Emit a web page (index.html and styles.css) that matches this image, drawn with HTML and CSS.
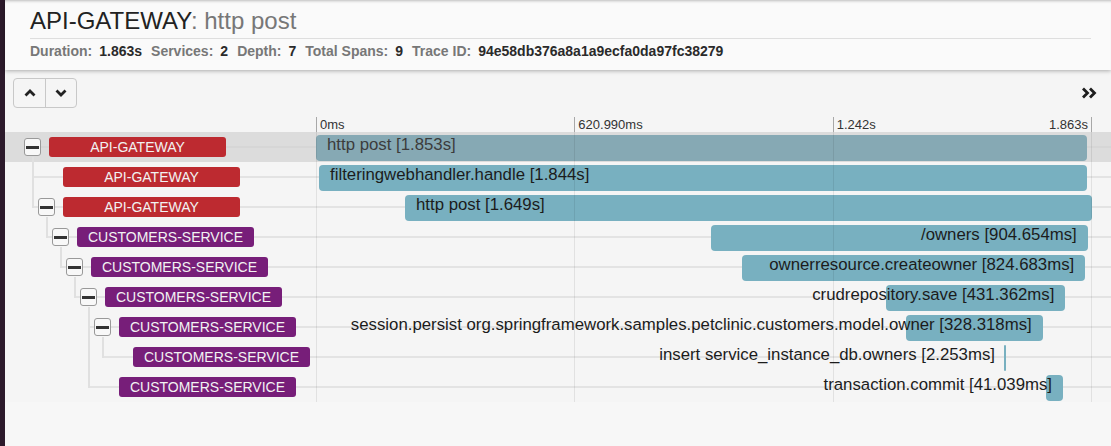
FILE: index.html
```html
<!DOCTYPE html>
<html>
<head>
<meta charset="utf-8">
<title>Trace</title>
<link rel="stylesheet" href="styles.css">
</head>
<body>
<div class="app">
  <div class="strip"></div>
  <main class="main">
    <header class="trace-header">
      <h1 class="title"><span class="svc">API-GATEWAY</span><span class="op">: http post</span></h1>
      <div class="stats">
        <span class="stat"><span class="k">Duration:</span><span class="v">1.863s</span></span>
        <span class="stat"><span class="k">Services:</span><span class="v">2</span></span>
        <span class="stat"><span class="k">Depth:</span><span class="v">7</span></span>
        <span class="stat"><span class="k">Total Spans:</span><span class="v">9</span></span>
        <span class="stat"><span class="k">Trace ID:</span><span class="v">94e58db376a8a1a9ecfa0da97fc38279</span></span>
      </div>
    </header>

    <div class="toolbar">
      <div class="btn-group">
        <button class="btn" type="button" aria-label="Previous">
          <svg width="12" height="8" viewBox="0 0 12 8"><polyline points="1.5,6.5 6,2 10.5,6.5" fill="none" stroke="#222" stroke-width="2.8"/></svg>
        </button>
        <button class="btn" type="button" aria-label="Next">
          <svg width="12" height="8" viewBox="0 0 12 8"><polyline points="1.5,1.5 6,6 10.5,1.5" fill="none" stroke="#222" stroke-width="2.8"/></svg>
        </button>
      </div>
      <button class="expand" type="button" aria-label="Expand">
        <svg width="16" height="12" viewBox="0 0 16 12"><polyline points="2,1.5 6.5,6 2,10.5" fill="none" stroke="#1e1e1e" stroke-width="2.8"/><polyline points="9,1.5 13.5,6 9,10.5" fill="none" stroke="#1e1e1e" stroke-width="2.8"/></svg>
      </button>
    </div>

    <div class="ticks">
      <div class="tick-spacer"></div>
      <div class="tick-scale">
        <div class="tick"><span>0ms</span></div>
        <div class="tick"><span>620.990ms</span></div>
        <div class="tick last"><span>1.242s</span><span>1.863s</span></div>
      </div>
    </div>

    <div class="rows">
      <div class="row selected root" style="--d:0">
        <div class="row-left"><span class="toggle"><i></i></span><span class="badge gw">API-GATEWAY</span></div>
        <div class="row-right"><div class="bar start" style="margin-left:0%;width:99.36%"><span class="label">http post [1.853s]</span></div></div>
      </div>
      <div class="row leaf" style="--d:1">
        <div class="row-left"><span class="badge gw">API-GATEWAY</span></div>
        <div class="row-right"><div class="bar start" style="margin-left:0.39%;width:98.97%"><span class="label">filteringwebhandler.handle [1.844s]</span></div></div>
      </div>
      <div class="row" style="--d:1">
        <div class="row-left"><span class="toggle"><i></i></span><span class="badge gw">API-GATEWAY</span></div>
        <div class="row-right"><div class="bar start" style="margin-left:11.47%;width:88.53%"><span class="label">http post [1.649s]</span></div></div>
      </div>
      <div class="row" style="--d:2">
        <div class="row-left"><span class="toggle"><i></i></span><span class="badge cs">CUSTOMERS-SERVICE</span></div>
        <div class="row-right"><div class="bar end" style="margin-left:50.9%;width:48.56%"><span class="label">/owners [904.654ms]</span></div></div>
      </div>
      <div class="row" style="--d:3">
        <div class="row-left"><span class="toggle"><i></i></span><span class="badge cs">CUSTOMERS-SERVICE</span></div>
        <div class="row-right"><div class="bar end" style="margin-left:54.86%;width:44.27%"><span class="label">ownerresource.createowner [824.683ms]</span></div></div>
      </div>
      <div class="row" style="--d:4">
        <div class="row-left"><span class="toggle"><i></i></span><span class="badge cs">CUSTOMERS-SERVICE</span></div>
        <div class="row-right"><div class="bar end" style="margin-left:73.41%;width:23.16%"><span class="label">crudrepository.save [431.362ms]</span></div></div>
      </div>
      <div class="row" style="--d:5">
        <div class="row-left"><span class="toggle"><i></i></span><span class="badge cs">CUSTOMERS-SERVICE</span></div>
        <div class="row-right"><div class="bar end" style="margin-left:76.03%;width:17.62%"><span class="label">session.persist org.springframework.samples.petclinic.customers.model.owner [328.318ms]</span></div></div>
      </div>
      <div class="row leaf" style="--d:6">
        <div class="row-left"><span class="badge cs">CUSTOMERS-SERVICE</span></div>
        <div class="row-right"><div class="bar end thin" style="margin-left:88.66%;width:2px"><span class="label">insert service_instance_db.owners [2.253ms]</span></div></div>
      </div>
      <div class="row leaf" style="--d:5">
        <div class="row-left"><span class="badge cs">CUSTOMERS-SERVICE</span></div>
        <div class="row-right"><div class="bar end" style="margin-left:94.07%;width:2.2%"><span class="label">transaction.commit [41.039ms]</span></div></div>
      </div>

      <svg class="tree-lines" width="311" height="270" viewBox="0 0 311 270" aria-hidden="true">
        <g stroke="#e0e0e0" stroke-width="2">
          <line x1="28" y1="25" x2="28" y2="76"/>
          <line x1="42" y1="85" x2="42" y2="106"/>
          <line x1="56" y1="115" x2="56" y2="136"/>
          <line x1="70" y1="145" x2="70" y2="166"/>
          <line x1="84" y1="175" x2="84" y2="256"/>
          <line x1="98" y1="205" x2="98" y2="226"/>
        </g>
      </svg>
      <div class="grid-lines"><span></span><span></span><span class="last"></span></div>
    </div>
  </main>
</div>
</body>
</html>
```

FILE: styles.css
```css
* { box-sizing: border-box; }

html, body {
  margin: 0;
  padding: 0;
}

body {
  font-family: "Liberation Sans", Arial, Helvetica, sans-serif;
  color: #333;
  background: #f7f7f7;
}

.app {
  display: flex;
  min-height: 100vh;
}

.strip {
  width: 5px;
  flex: none;
  background: #2c1a2b;
}

.main {
  flex: 1;
  min-width: 0;
  background: #f7f7f7;
}

/* header */
.trace-header {
  background: #fafafa;
  height: 70px;
  padding: 7px 20px 10px 25px;
  box-shadow: inset 0 3px 3px -2px rgba(0, 0, 0, 0.25), 0 1px 4px rgba(0, 0, 0, 0.3);
  position: relative;
  z-index: 1;
}

.title {
  margin: 0;
  font-size: 24px;
  line-height: 28px;
  font-weight: normal;
  padding-bottom: 3px;
  border-bottom: 1px solid #dedede;
}

.title .svc { color: #222; }
.title .op { color: #777; }

.stats {
  margin-top: 4px;
  display: flex;
  font-size: 14px;
  line-height: 17px;
  font-weight: bold;
  white-space: nowrap;
}

.stat { margin-right: 9px; }
.stat .k { color: #777; }
.stat .v { color: #2a2a2a; margin-left: 7px; }

/* toolbar */
.toolbar {
  height: 47px;
  display: flex;
  align-items: flex-start;
  justify-content: space-between;
  padding: 8px 14px 0 8px;
  background: #f5f5f5;
}

.btn-group {
  display: flex;
  border: 1px solid #c8c8c8;
  border-radius: 4px;
  height: 30px;
}

.btn {
  width: 31px;
  height: 28px;
  border: 0;
  background: transparent;
  padding: 0;
  display: flex;
  align-items: center;
  justify-content: center;
}

.btn + .btn { border-left: 1px solid #c8c8c8; }

.expand {
  border: 0;
  background: transparent;
  padding: 0;
  margin-top: 9px;
  width: 16px;
  height: 12px;
  display: flex;
}

/* ticks */
.ticks {
  display: flex;
  height: 15px;
  background: #f5f5f5;
}

.tick-spacer { width: 311px; flex: none; }

.tick-scale {
  width: 776px;
  flex: none;
  display: flex;
}

.tick {
  flex: 1;
  border-left: 1px solid #a8a8a8;
  font-size: 13px;
  line-height: 15px;
  color: #333;
  padding: 0 3px 0 3px;
  display: flex;
  justify-content: space-between;
}

.tick.last { border-right: 1px solid #a8a8a8; }

/* rows */
.rows {
  position: relative;
  display: flex;
  flex-direction: column;
  background: #f5f5f5;
}

.row {
  --ls: calc(13px + 14px * var(--d));
  height: 30px;
  display: flex;
  background-image: linear-gradient(#e3e3e3, #e3e3e3);
  background-repeat: no-repeat;
  background-size: 100% 2px;
  background-position: var(--ls) 14px;
}

.row.root { --ls: 19px; }

.row.selected {
  background-color: #dcdcdc;
  background-image: linear-gradient(#d6d6d6, #d6d6d6);
}

.row-left {
  width: 311px;
  flex: none;
  display: flex;
  align-items: center;
  padding-left: calc(19px + 14px * var(--d));
}

.row.leaf .row-left { padding-left: calc(44px + 14px * var(--d)); }

.toggle {
  width: 17px;
  height: 18px;
  flex: none;
  margin-right: 8px;
  border: 1px solid #999;
  border-radius: 3px;
  background: #f8f8f8;
  display: flex;
  align-items: center;
  padding: 0 1px;
}

.toggle i {
  display: block;
  width: 100%;
  height: 3px;
  background: #333;
}

.badge {
  width: 177px;
  height: 20px;
  flex: none;
  border-radius: 3px;
  color: #f2f2f2;
  font-size: 14px;
  line-height: 21px;
  text-align: center;
  white-space: nowrap;
}

.badge.gw { background: #bd2a30; }
.badge.cs { background: #771e79; }

.row-right {
  width: 776px;
  flex: none;
  padding-top: 3px;
}

.bar {
  height: 26px;
  border-radius: 4px;
  background: #78b0c0;
  display: flex;
  white-space: nowrap;
  font-size: 16.8px;
  line-height: 19px;
  color: #1c1c1c;
}

.row.selected .bar {
  background: #86a9b4;
  color: #3c3c3c;
}

.bar.start { justify-content: flex-start; }
.bar.start .label { margin-left: 11px; }

.bar.end { justify-content: flex-end; }
.bar.end .label { margin-right: 11px; flex: none; }

.bar.thin { border-radius: 1px; }

.tree-lines {
  position: absolute;
  left: 0;
  top: 0;
  pointer-events: none;
}

.grid-lines {
  position: absolute;
  top: 0;
  bottom: 0;
  left: 311px;
  width: 776px;
  display: flex;
  pointer-events: none;
}

.grid-lines span {
  flex: 1;
  border-left: 1px solid rgba(0, 0, 0, 0.08);
}

.grid-lines span.last { border-right: 1px solid rgba(0, 0, 0, 0.08); }
```
